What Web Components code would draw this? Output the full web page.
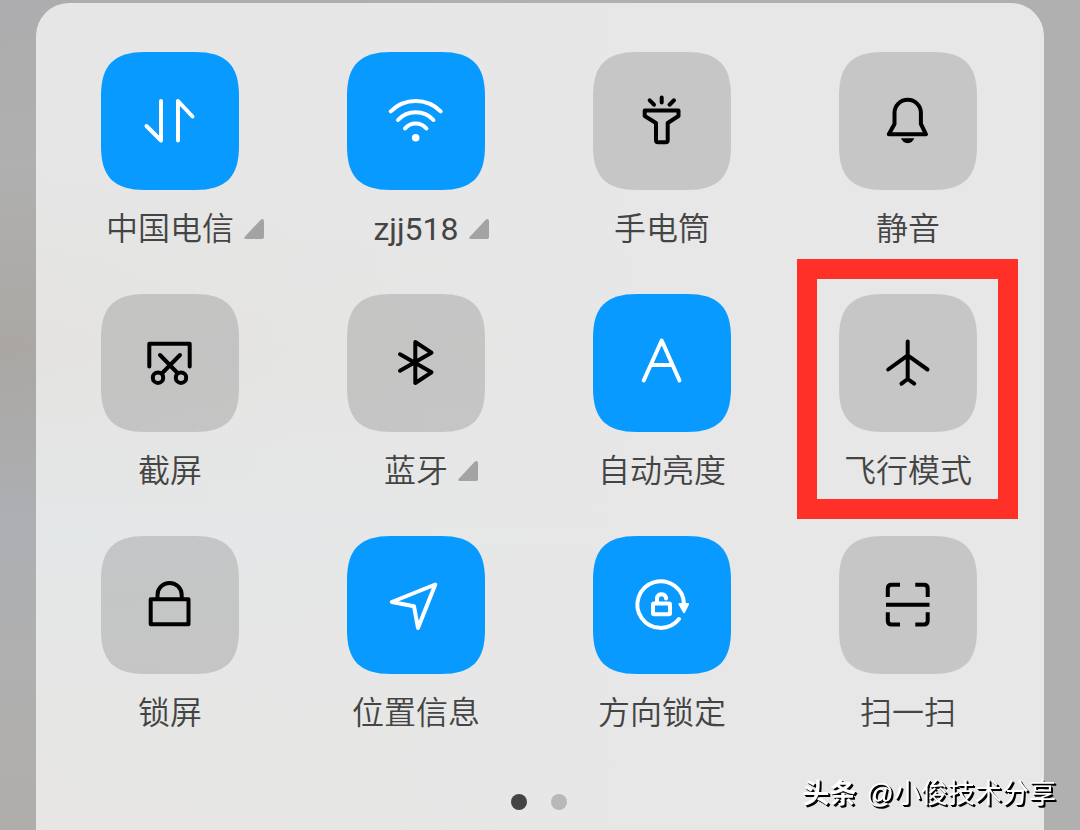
<!DOCTYPE html>
<html lang="zh-CN">
<head>
  <meta charset="utf-8">
  <meta name="viewport" content="width=device-width, initial-scale=1">
  <title>控制中心</title>
  <style>
    html, body {
      height: 100%;
      margin: 0;
    }
    body {
      background: linear-gradient(90deg, rgba(176, 176, 176, 0), #b0b0b0 50%),
        linear-gradient(#adacae, #b0b0b0 20%, #aaa7a3 42%, #adafb3 63%, #b0b0b0 80%, #b0aeab);
      color: #444;
      font-family: Roboto, "Noto Sans CJK SC", sans-serif;
      font-weight: 350;
      overflow: hidden;
    }
    /* Roboto has no cut between 300 and 400 */
    quick-tile[lang="en"] {
      font-weight: 400;
    }
  </style>
</head>
<body>
  <control-center>
    <quick-tile icon="data" active expandable>中国电信</quick-tile>
    <quick-tile icon="wifi" active expandable lang="en">zjj518</quick-tile>
    <quick-tile icon="torch">手电筒</quick-tile>
    <quick-tile icon="bell">静音</quick-tile>
    <quick-tile icon="screenshot">截屏</quick-tile>
    <quick-tile icon="bluetooth" expandable>蓝牙</quick-tile>
    <quick-tile icon="brightness" active>自动亮度</quick-tile>
    <quick-tile icon="airplane" marked>飞行模式</quick-tile>
    <quick-tile icon="lock">锁屏</quick-tile>
    <quick-tile icon="location" active>位置信息</quick-tile>
    <quick-tile icon="rotation" active>方向锁定</quick-tile>
    <quick-tile icon="scan">扫一扫</quick-tile>
    <page-dots slot="pager" count="2" current="0"></page-dots>
  </control-center>
  <author-mark><b slot="brand">头条</b>@小俊技术分享</author-mark>

  <script>
    // icons share the 138 x 138 box of the tile
    const icons = {
      data: '<path d="M45.500 74 60 88.500V49M77 88.500V49l14.500 15.500"/>',
      wifi: `
        <path d="M43.700 59.300a35.500 35.500 0 0 1 50 0M51 68a24.200 24.200 0 0 1 35.400 0M58 76.500a14 14 0 0 1 21.400 0"/>
        <circle class="solid" cx="68.700" cy="85.700" r="3.800"/>`,
      torch: `
        <path d="M56.700 48.300l4.300 4.400M68.700 45.500v5M81 48.300l-4.500 4.400"/>
        <path d="M51.700 58.500h33.800v5.500l-10.800 7v17.300q0 2-2 2h-7.700q-2 0-2-2v-17.300l-11.300-7z"/>`,
      bell: `
        <path d="M49.800 82.300 55.500 72V61a13.200 13.200 0 0 1 26.400 0V72L87 82.300z"/>
        <path class="solid" d="M62 86.300h13.300q-2 4.900-6.600 4.900t-6.700-4.900z"/>`,
      screenshot: `
        <path d="M48.300 72.500V49.700H88.700V72.500M59 61 76.500 79M79 61 61.300 79"/>
        <circle cx="57" cy="83.700" r="5.200"/>
        <circle cx="80" cy="83.700" r="5.200"/>`,
      bluetooth: '<path d="M53 60.300 84.500 78.300 68.300 89V48L84.500 58.700 53 76.700"/>',
      brightness: '<path d="M50.700 86.500 68.700 46.500 86.500 86.500M58.300 71H79"/>',
      airplane: '<path d="M68.700 47.500V85.300M49.200 75.500 68.700 61.300 88.500 75.500M62.500 89.700l6.200-4.700 6.500 4.700"/>',
      lock: `
        <rect x="49.700" y="63.300" width="37.800" height="25"/>
        <path d="M56.500 63V59a12.100 12.100 0 0 1 24.200 0v4"/>`,
      location: '<path d="M88.300 48.500 44.800 66 67 70.300 71 92z"/>',
      rotation: `
        <path d="M86 83a23.300 23.300 0 1 1 5-14.700"/>
        <path class="solid" d="M85.500 68.500q-.5-1.500 1-1.500h8.500q1.500 0 1 1.500l-4 8q-1 1.500-2 0z"/>
        <rect x="60" y="67.500" width="17" height="10.700" rx="1"/>
        <path d="M64 67v-5.500a4.700 4.700 0 0 1 9 0v1"/>`,
      scan: `
        <path class="flat" d="M48.800 61v-8.500q0-3.800 3.800-3.800h8.400M76.300 48.700h8.600q3.800 0 3.800 3.800v8.500M88.700 76.300v8.500q0 3.800-3.800 3.800h-8.600M61 88.600h-8.400q-3.800 0-3.800-3.800v-8.500M47 68.700H90.500"/>`
    };

    class QuickTile extends HTMLElement {
      constructor() {
        super();
        this.attachShadow({ mode: 'open' });
      }

      connectedCallback() {
        const active = this.hasAttribute('active');
        this.shadowRoot.innerHTML = `
          <style>
            :host {
              align-items: center;
              display: flex;
              flex-direction: column;
              gap: 15px;
              position: relative;
            }
            button {
              appearance: none;
              background: none;
              border: 0;
              color: inherit;
              cursor: pointer;
              font: inherit;
              padding: 0;
            }
            .tile {
              color: #000;
              height: 138px;
              width: 138px;
            }
            .tile[aria-pressed="true"] {
              color: #fff;
            }
            svg {
              display: block;
              fill: none;
              stroke: currentColor;
              stroke-linecap: round;
              stroke-linejoin: round;
              stroke-width: 4;
            }
            .shape {
              fill: #000;
              fill-opacity: 0.14;
              stroke: none;
            }
            .tile[aria-pressed="true"] .shape {
              fill: #089aff;
              fill-opacity: 1;
            }
            .solid, .corner {
              fill: currentColor;
              stroke: none;
            }
            .flat {
              stroke-linecap: butt;
            }
            .caption {
              align-items: center;
              display: grid;
              font-size: 32px;
              grid-template-columns: 1fr auto 1fr;
              line-height: 48px;
              white-space: nowrap;
              width: 100%;
            }
            .caption label {
              grid-column: 2;
            }
            .more {
              color: #a3a3a3;
              justify-self: start;
              margin-left: 10px;
            }
            /* red frame drawn round a tile */
            .frame {
              border: 20px solid #ff3028;
              inset: -35px 13px -24px 12px;
              pointer-events: none;
              position: absolute;
            }
          </style>
          <button class="tile" id="tile" type="button" aria-pressed="${active}">
            <svg viewBox="0 0 138 138" width="138" height="138" aria-hidden="true">
              <path class="shape" d="M0 44C0 13 13 0 44 0H94C125 0 138 13 138 44V94C138 125 125 138 94 138H44C13 138 0 125 0 94Z"/>
              ${icons[this.getAttribute('icon')]}
            </svg>
          </button>
          <div class="caption">
            <label for="tile"><slot></slot></label>
            ${this.hasAttribute('expandable') ? `
              <button class="more" type="button" aria-label="更多">
                <svg viewBox="0 0 20 20" width="20" height="20">
                  <path class="corner" d="M17 .5q3-1.500 3 2V18q0 2-2 2H2q-3 0-1-2.500z"/>
                </svg>
              </button>` : ''}
          </div>
          ${this.hasAttribute('marked') ? '<div class="frame"></div>' : ''}
        `;
        const tile = this.shadowRoot.getElementById('tile');
        tile.addEventListener('click', () => {
          tile.setAttribute('aria-pressed', tile.getAttribute('aria-pressed') !== 'true');
        });
      }
    }

    class PageDots extends HTMLElement {
      connectedCallback() {
        const count = Number(this.getAttribute('count'));
        const current = Number(this.getAttribute('current'));
        let dots = '';
        for (let i = 0; i < count; i++) {
          dots += `<button type="button" aria-label="第${i + 1}页" ${i === current ? 'aria-current="page"' : ''}></button>`;
        }
        this.attachShadow({ mode: 'open' }).innerHTML = `
          <style>
            :host {
              display: flex;
              gap: 24px;
              justify-content: center;
            }
            button {
              background: #b8b8b8;
              border: 0;
              border-radius: 50%;
              height: 16px;
              padding: 0;
              width: 16px;
            }
            button[aria-current] {
              background: #444;
            }
          </style>
          ${dots}
        `;
      }
    }

    class ControlCenter extends HTMLElement {
      constructor() {
        super();
        this.attachShadow({ mode: 'open' }).innerHTML = `
          <style>
            :host {
              box-sizing: border-box;
              display: block;
              min-height: 100%;
              padding: 3px 36px 0;
            }
            main {
              background: linear-gradient(90deg, rgba(231, 231, 231, 0), #e7e7e7 60%),
                linear-gradient(#e6e6e6, #e6e6e6 20%, #e4e3e1 42%, #e4e7e8 64%, #e6e6e5 84%, #e7e6e4);
              border-radius: 33px 33px 0 0;
              box-sizing: border-box;
              min-height: calc(100vh - 3px);
              padding: 49px 13px 20px 11px;
            }
            .tiles {
              display: grid;
              grid-template-columns: repeat(4, 1fr);
              row-gap: 41px;
            }
            .pager {
              margin-top: 57px;
            }
          </style>
          <main>
            <div class="tiles"><slot></slot></div>
            <div class="pager"><slot name="pager"></slot></div>
          </main>
        `;
      }
    }

    class AuthorMark extends HTMLElement {
      constructor() {
        super();
        this.attachShadow({ mode: 'open' }).innerHTML = `
          <style>
            :host {
              align-items: center;
              bottom: 16px;
              color: #fff;
              display: flex;
              font-family: "Liberation Sans", "Noto Sans CJK SC", sans-serif;
              font-size: 27px;
              font-weight: 400;
              gap: 10px;
              line-height: 40px;
              position: fixed;
              right: 24px;
              text-shadow: 1px 1px 0 #000, 2px 2px 0 #000;
              white-space: nowrap;
            }
          </style>
          <slot name="brand"></slot>
          <span><slot></slot></span>
        `;
      }
    }

    customElements.define('quick-tile', QuickTile);
    customElements.define('page-dots', PageDots);
    customElements.define('control-center', ControlCenter);
    customElements.define('author-mark', AuthorMark);
  </script>
</body>
</html>
